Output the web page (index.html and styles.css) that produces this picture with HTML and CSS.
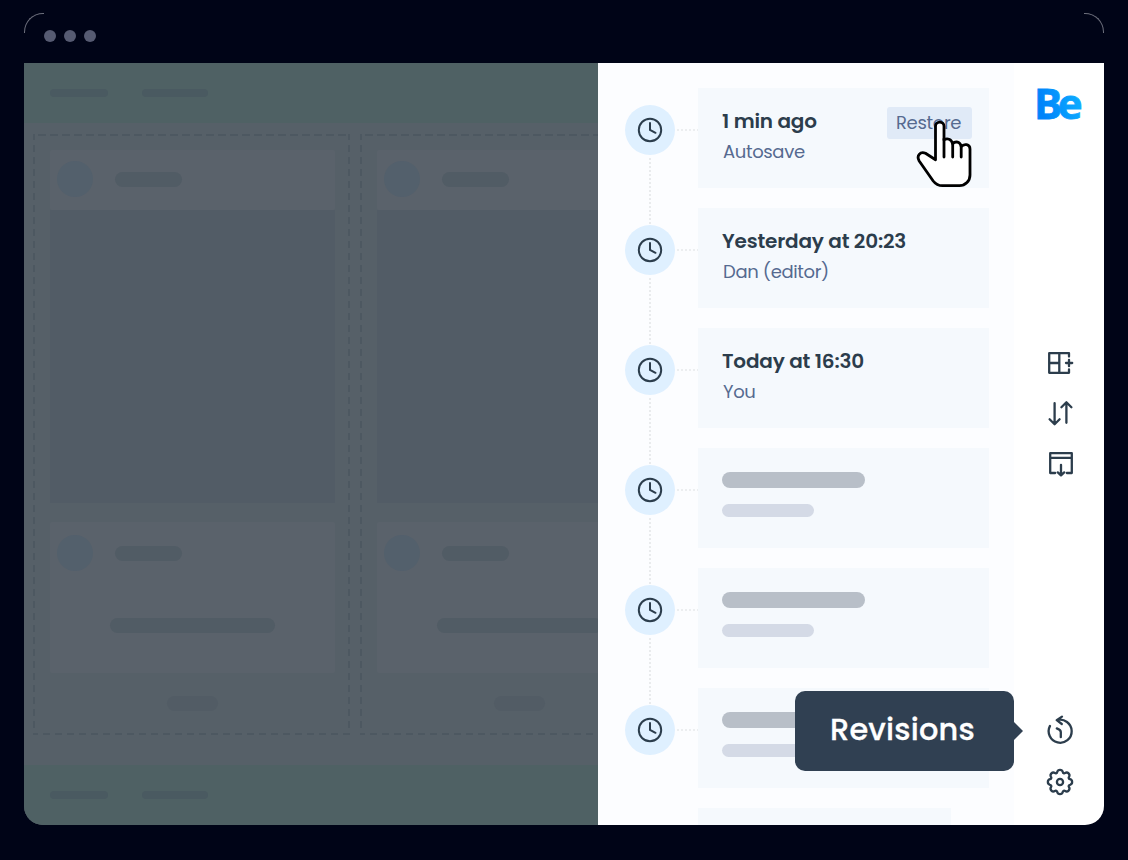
FILE: index.html
```
<!DOCTYPE html>
<html lang="en">
<head>
<meta charset="utf-8">
<title>Revisions</title>
<link rel="stylesheet" href="styles.css">
</head>
<body>
<svg class="defs" aria-hidden="true">
  <symbol id="clock" viewBox="0 0 26 26"><circle cx="13" cy="13" r="11.2"/><path d="M13 6V13L18.5 15.8"/></symbol>
</svg>
<div class="window">
  <div class="titlebar"><i class="dot"></i><i class="dot"></i><i class="dot"></i></div>
  <div class="content">
    <div class="preview">
      <div class="band"><i class="bar nav-a"></i><i class="bar nav-b"></i></div>
      <div class="columns">
        <div class="column">
          <div class="card head"><i class="avatar"></i><i class="bar name"></i></div>
          <div class="photo"></div>
          <div class="card post"><div class="card-row"><i class="avatar"></i><i class="bar name"></i></div><i class="bar line"></i></div>
          <i class="bar more"></i>
        </div>
        <div class="column">
          <div class="card head"><i class="avatar"></i><i class="bar name"></i></div>
          <div class="photo"></div>
          <div class="card post"><div class="card-row"><i class="avatar"></i><i class="bar name"></i></div><i class="bar line"></i></div>
          <i class="bar more"></i>
        </div>
      </div>
      <div class="band"><i class="bar nav-a"></i><i class="bar nav-b"></i></div>
    </div>
    <div class="timeline">
      <div class="entry">
        <div class="marker"><span class="badge"><svg><use href="#clock"/></svg></span><i class="vdots"></i></div><i class="hdots"></i>
        <div class="revision"><div class="title">1 min ago</div><div class="author">Autosave</div>
          <div class="restore"><span>Restore</span></div>
          <svg class="hand" viewBox="0 0 54 66"><path d="M18.5 38.7V5.3a4.2 4.2 0 0 1 8.5 0V19C30 16.7 34.5 18 35.6 22.8C38.5 19.8 43.3 20.6 44.2 25.6C47 22.3 53 23 53 28V54C53 60 48.5 64.7 42.3 64.7H25.5C21 64.7 18.5 63 16.2 60L2.2 40C-.8 35 3.2 30 8.5 32.3Z"/><path d="M27 18V36M35.7 22V36M44.2 25V36"/></svg>
        </div>
      </div>
      <div class="entry">
        <div class="marker"><span class="badge"><svg><use href="#clock"/></svg></span><i class="vdots"></i></div><i class="hdots"></i>
        <div class="revision"><div class="title">Yesterday at 20:23</div><div class="author">Dan (editor)</div></div>
      </div>
      <div class="entry">
        <div class="marker"><span class="badge"><svg><use href="#clock"/></svg></span><i class="vdots"></i></div><i class="hdots"></i>
        <div class="revision"><div class="title">Today at 16:30</div><div class="author">You</div></div>
      </div>
      <div class="entry">
        <div class="marker"><span class="badge"><svg><use href="#clock"/></svg></span><i class="vdots"></i></div><i class="hdots"></i>
        <div class="revision"><div class="ghost-title"></div><div class="ghost-author"></div></div>
      </div>
      <div class="entry">
        <div class="marker"><span class="badge"><svg><use href="#clock"/></svg></span><i class="vdots"></i></div><i class="hdots"></i>
        <div class="revision"><div class="ghost-title"></div><div class="ghost-author"></div></div>
      </div>
      <div class="entry">
        <div class="marker"><span class="badge"><svg><use href="#clock"/></svg></span></div><i class="hdots"></i>
        <div class="revision"><div class="ghost-title"></div><div class="ghost-author"></div></div>
      </div>
      <div class="entry last"><div class="revision"></div></div>
    </div>
    <div class="sidebar">
      <svg class="logo" viewBox="0 0 60 60">
        <defs><linearGradient id="brand" x1="0" y1=".6" x2="1" y2=".3"><stop offset=".15" stop-color="#0084fa"/><stop offset=".85" stop-color="#0ca8ff"/></linearGradient></defs>
        <text x="5" y="44.4" textLength="48.6" lengthAdjust="spacing">Be</text>
      </svg>
      <div class="tools">
        <svg class="icon" viewBox="0 0 30 30"><path d="M24 8.5V5.2H4.2V24.8H24V21.5M14.3 5.2V24.8M4.2 15H14.3M24 11.8V18.2M21 15H27.2"/></svg>
        <svg class="icon" viewBox="0 0 30 30"><path d="M9.6 5.2V26M4.6 21.3L9.6 26.3L14.6 21.3M21.4 24.8V4.5M16.4 9.2L21.4 4.2L26.4 9.2"/></svg>
        <svg class="icon" viewBox="0 0 30 30"><path d="M10.2 25H5.2V5.2H26.8V25H21.8M5.2 9.8H26.8M16 16.8V27.2M12.8 24.4L16 27.4L19.2 24.4"/></svg>
      </div>
    </div>
    <div class="rail-end">
      <svg class="icon" viewBox="0 0 30 30"><path d="M12 5.2A11.5 11.5 0 1 1 5 10.9M17 1.6L11.7 5.2L16.8 9M11.8 13.4Q15.8 15 15.8 17V22.2"/></svg>
      <svg class="icon" viewBox="0 0 30 30"><g transform="translate(15 15)"><path d="M-2.8-10A2.9 2.9 0 0 1 2.8-10A1.35 1.35 0 0 0 5.09-9.05A2.9 2.9 0 0 1 9.05-5.09A1.35 1.35 0 0 0 10-2.8A2.9 2.9 0 0 1 10 2.8A1.35 1.35 0 0 0 9.05 5.09A2.9 2.9 0 0 1 5.09 9.05A1.35 1.35 0 0 0 2.8 10A2.9 2.9 0 0 1-2.8 10A1.35 1.35 0 0 0-5.09 9.05A2.9 2.9 0 0 1-9.05 5.09A1.35 1.35 0 0 0-10 2.8A2.9 2.9 0 0 1-10-2.8A1.35 1.35 0 0 0-9.05-5.09A2.9 2.9 0 0 1-5.09-9.05A1.35 1.35 0 0 0-2.8-10Z"/><circle r="3.1"/></g></svg>
      <div class="tooltip"><span>Revisions</span></div>
    </div>
  </div>
</div>
</body>
</html>
```
FILE: styles.css
```
* { box-sizing: border-box; }
body {
  margin: 0;
  width: 1128px;
  height: 860px;
  padding: 13px 24px 35px;
  background: #000417;
  font-family: Poppins, Inter, sans-serif;
  overflow: hidden;
}
.defs { position: absolute; width: 0; height: 0; }
.window { position: relative; height: 812px; }
.window::before, .window::after {
  content: "";
  position: absolute;
  top: 0;
  width: 19px;
  height: 19px;
  border-top: 1px solid #6d707d;
}
.window::before { left: 0; border-left: 1px solid #6d707d; border-top-left-radius: 19px; }
.window::after { right: 0; border-right: 1px solid #6d707d; border-top-right-radius: 19px; }
.titlebar { height: 50px; padding: 17px 20px; display: flex; gap: 8px; }
.dot { width: 12px; height: 12px; border-radius: 50%; background: #565b72; }
.content {
  height: 762px;
  display: grid;
  grid-template-columns: 574px 416px 90px;
  grid-template-rows: 635px 127px;
  border-radius: 0 0 19px 19px;
  overflow: hidden;
}

/* Dimmed page preview */
.preview { grid-row: 1 / 3; background: #566068; display: grid; grid-template-rows: 60px 642px 60px; overflow: hidden; min-width: 0; }
.band { background: #4f6164; display: flex; align-items: center; padding-left: 26px; gap: 34px; }
.bar { display: block; background: #515c65; border-radius: 8px; flex: none; }
.band .bar { height: 8px; background: #4a5a61; }
.nav-a { width: 58px; }
.nav-b { width: 66px; }
.columns { display: grid; grid-template-columns: 317px 317px; gap: 10px; padding: 11px 0 0 9px; align-items: start; }
.column {
  --dash: #4d5861;
  height: 601px;
  padding: 16px 15px 0 17px;
  background:
    repeating-linear-gradient(90deg, var(--dash) 0 1px, transparent 1px 5px, var(--dash) 5px 12px) 0 0 / 100% 2px no-repeat,
    repeating-linear-gradient(90deg, var(--dash) 0 5px, transparent 5px 10px, var(--dash) 10px 12px) 0 100% / 100% 2px no-repeat,
    repeating-linear-gradient(180deg, var(--dash) 0 6px, transparent 6px 11px, var(--dash) 11px 12px) 0 0 / 2px 100% no-repeat,
    repeating-linear-gradient(180deg, var(--dash) 0 6px, transparent 6px 11px, var(--dash) 11px 12px) 100% 0 / 2px 100% no-repeat;
}
.card { background: #5a626b; border-radius: 2px; }
.head, .card-row { display: flex; align-items: center; padding-left: 7px; gap: 22px; }
.head { height: 60px; padding-bottom: 2px; }
.avatar { width: 36px; height: 36px; border-radius: 50%; background: #53606c; }
.name { width: 67px; height: 15px; }
.photo { height: 293px; background: #525c66; }
.post { margin-top: 19px; height: 151px; padding-top: 13px; }
.line { width: 165px; height: 15px; margin: 47px 0 0 60px; }
.more { width: 51px; height: 15px; margin: 23px 0 0 117px; background: #525c65; }

/* Revision list */
.timeline { grid-row: 1 / 3; background: #fcfdff; padding: 25px 25px 0 27px; display: flex; flex-direction: column; gap: 20px; min-width: 0; height: 762px; }
.entry { display: grid; grid-template-columns: 50px 23px 291px; grid-template-rows: 100px; height: 100px; flex: none; }
.marker { padding-top: 17px; display: flex; flex-direction: column; align-items: center; height: 137px; }
.badge { width: 50px; height: 50px; border-radius: 50%; background: #dff0ff; display: grid; place-items: center; flex: none; }
.badge svg { width: 26px; height: 26px; fill: none; stroke: #2c3d4c; stroke-width: 2; stroke-linecap: round; }
.vdots { width: 2px; height: 66px; margin-top: 3px; background: repeating-linear-gradient(#e9ebed 0 2px, transparent 2px 4px); }
.hdots { width: 21px; height: 2px; margin: 41px 0 0 2px; background: repeating-linear-gradient(90deg, #eceef0 0 2px, transparent 2px 4px); }
.revision { position: relative; background: #f5f9fd; padding: 18px 24px 0; }
.title { font-size: 20px; line-height: 30px; height: 30px; font-weight: 600; letter-spacing: -0.18px; color: #2c3d4c; white-space: nowrap; }
.author { margin-top: 1px; padding-left: 1px; font-size: 18px; letter-spacing: -0.35px; line-height: 30px; color: #566a90; white-space: nowrap; }
.restore {
  position: absolute;
  left: 189px;
  top: 19px;
  width: 85px;
  height: 32px;
  border-radius: 3px;
  background: #e0eaf7;
  color: #566a90;
  font-size: 18px;
  letter-spacing: -0.33px;
  line-height: 32px;
  padding-left: 9px;
}
.hand { position: absolute; left: 219px; top: 33px; width: 54px; height: 66px; overflow: visible; fill: #fff; stroke: #000; stroke-width: 2.8; stroke-linecap: round; stroke-linejoin: round; }
.ghost-title { margin-top: 6px; width: 143px; height: 16px; border-radius: 8px; background: #b8bfc8; }
.ghost-author { margin-top: 16px; width: 92px; height: 13px; border-radius: 7px; background: #d4dae6; }
.last { grid-template-columns: 253px; grid-template-rows: 17px; padding-left: 73px; height: 17px; }

/* Tool rail */
.sidebar { background: #fff; display: flex; flex-direction: column; align-items: center; }
.logo { width: 60px; height: 60px; margin-top: 12px; }
.logo text {
  font-family: "Open Sans", sans-serif;
  font-size: 42px;
  font-weight: 700;
  fill: url(#brand);
  stroke: url(#brand);
  stroke-width: 0.8px;
}
.tools { margin: 213px 0 0 2px; display: flex; flex-direction: column; gap: 20px; }
.rail-end { position: relative; grid-column: 3; background: #fff; padding: 17px 0 0 31px; display: flex; flex-direction: column; gap: 22px; }
.icon { width: 30px; height: 30px; display: block; fill: none; stroke: #2c3d4c; stroke-width: 2.3; stroke-linecap: round; stroke-linejoin: round; }
.tooltip {
  position: absolute;
  right: 90px;
  top: -7px;
  width: 219px;
  height: 80px;
  border-radius: 10px;
  background: #304052;
  color: #fff;
  font-size: 30.4px;
  font-weight: 500;
  letter-spacing: 0.2px;
  -webkit-text-stroke: 0.3px #fff;
  line-height: 78px;
  padding-left: 35px;
}
.tooltip::after {
  content: "";
  position: absolute;
  left: 100%;
  top: 31px;
  border: solid transparent;
  border-width: 9px 0 9px 9px;
  border-left-color: #304052;
}
```
